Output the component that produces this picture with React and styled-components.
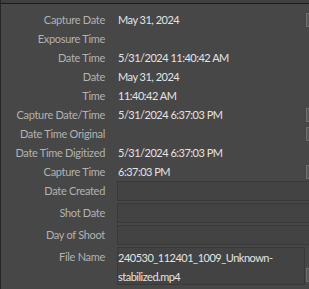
import React from "react";
import styled, { createGlobalStyle } from "styled-components";

const Global = createGlobalStyle`
  html, body { margin: 0; padding: 0; background: #474747; overflow: hidden; }
  body { font-family: Lato, "Noto Sans", sans-serif; }
`;

const Frame = styled.div`
  width: 309px;
  height: 289px;
  overflow: hidden;
  background: #474747;
  border-left: 1px solid #262626;
  box-sizing: border-box;
`;

const TopStrip = styled.div`
  height: 3px;
  background: #3f3f3f;
  border-bottom: 1px solid #1c1c1c;
`;

const Panel = styled.div`
  width: 330px;
  display: grid;
  grid-template-columns: 104px 200px 20px;
  padding-top: 6px;
  font-size: 11px;
`;

const Label = styled.div`
  text-align: right;
  color: #b2b2b2;
  letter-spacing: -0.3px;
  height: ${(p) => p.$h}px;
  line-height: ${(p) => (p.$box ? 20 : 19)}px;
  white-space: nowrap;
`;

const Value = styled.div`
  color: #e4e4e4;
  letter-spacing: -0.5px;
  height: ${(p) => p.$h}px;
  line-height: 19px;
  padding-left: 13px;
  white-space: nowrap;
`;

const Box = styled.div`
  box-sizing: border-box;
  grid-column: ${(p) => (p.$span ? "span 2" : "auto")};
  margin-left: 12px;
  height: ${(p) => p.$h - 2}px;
  margin-bottom: 2px;
  background: #434343;
  border: 1px solid #393939;
  color: #e4e4e4;
  letter-spacing: -0.5px;
  line-height: 19px;
  padding: 0 28px 0 0;
  white-space: ${(p) => (p.$wrap ? "normal" : "nowrap")};
  word-break: ${(p) => (p.$wrap ? "normal" : "normal")};
`;

const BtnCell = styled.div`
  height: ${(p) => p.$h}px;
  display: flex;
  padding-left: 1px;
  align-items: ${(p) => (p.$end ? "flex-end" : "center")};
`;

const MiniBtn = styled.div`
  width: 12px;
  height: 14px;
  box-sizing: border-box;
  background: #585858;
  border: 1px solid #6e6e6e;
  display: flex;
  align-items: center;
  padding-left: 1px;
  margin-bottom: ${(p) => (p.$end ? 5 : 0)}px;
`;

function MinusIcon() {
  return (
    <svg width="8" height="9" viewBox="0 0 8 9">
      <rect x="1" y="4" width="4" height="1" fill="#d8d8d8" />
    </svg>
  );
}

function MenuIcon() {
  return (
    <svg width="8" height="9" viewBox="0 0 8 9">
      <rect x="1" y="1" width="6" height="1" fill="#d8d8d8" />
      <rect x="1" y="4" width="6" height="1" fill="#d8d8d8" />
      <rect x="1" y="7" width="6" height="1" fill="#d8d8d8" />
    </svg>
  );
}

const rows = [
  { label: "Capture Date", value: "May 31, 2024", btn: "minus" },
  { label: "Exposure Time", value: "" },
  { label: "Date Time", value: "5/31/2024 11:40:42 AM" },
  { label: "Date", value: "May 31, 2024" },
  { label: "Time", value: "11:40:42 AM" },
  { label: "Capture Date/Time", value: "5/31/2024 6:37:03 PM", btn: "minus" },
  { label: "Date Time Original", value: "", btn: "minus" },
  { label: "Date Time Digitized", value: "5/31/2024 6:37:03 PM" },
  { label: "Capture Time", value: "6:37:03 PM", btn: "menu" },
  { label: "Date Created", box: true, h: 22, span: true },
  { label: "Shot Date", box: true, h: 22, span: true },
  { label: "Day of Shoot", box: true, h: 22, span: true },
  {
    label: "File Name",
    box: true,
    wrap: true,
    h: 40,
    value: "240530_112401_1009_Unknown-stabilized.mp4",
    btn: "menu",
    end: true,
  },
];

export default function App() {
  return (
    <>
      <Global />
      <Frame>
        <TopStrip />
        <Panel>
          {rows.map((r, i) => {
            const h = r.h || 19;
            return (
              <React.Fragment key={i}>
                <Label $h={h} $box={r.box}>{r.label}</Label>
                {r.box ? (
                  <Box $h={h} $wrap={r.wrap} $span={r.span}>{r.value}</Box>
                ) : (
                  <Value $h={h}>{r.value}</Value>
                )}
                {!r.span && (
                  <BtnCell $h={h} $end={r.end}>
                    {r.btn && (
                      <MiniBtn $end={r.end}>
                        {r.btn === "menu" ? <MenuIcon /> : <MinusIcon />}
                      </MiniBtn>
                    )}
                  </BtnCell>
                )}
              </React.Fragment>
            );
          })}
        </Panel>
      </Frame>
    </>
  );
}
